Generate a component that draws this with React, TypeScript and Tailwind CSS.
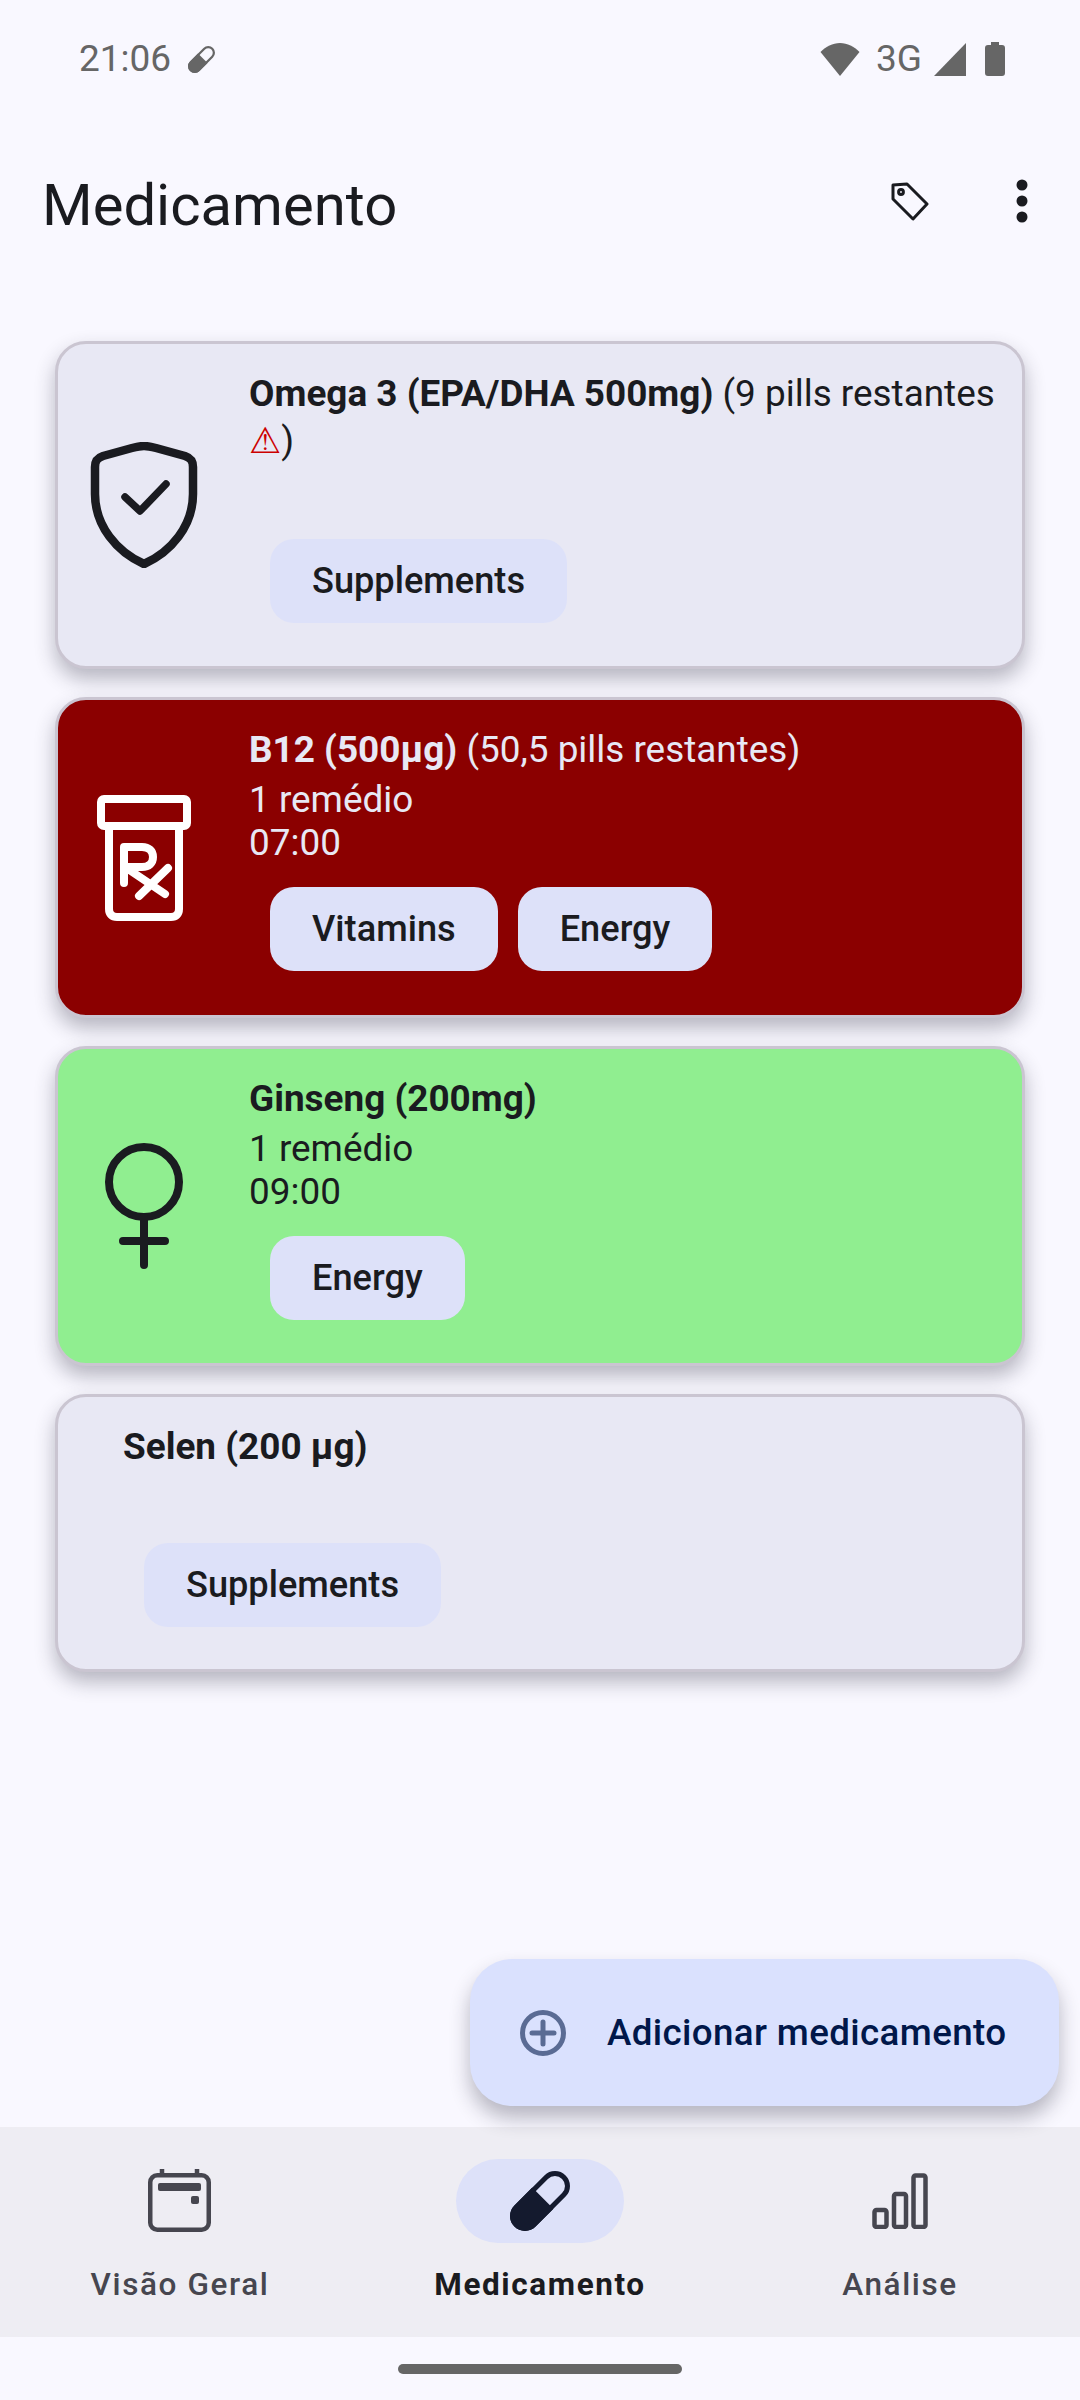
import React from "react";

type Med = {
  name: string;
  extra?: string;
  warn?: boolean;
  lines: string[];
  tags: string[];
  icon?: React.ReactNode;
  box: string;
  text: string;
  height: string;
};

const ShieldIcon = () => (
  <svg width="126" height="126" viewBox="0 0 126 126" fill="none" stroke="currentColor" strokeLinecap="round" strokeLinejoin="round">
    <path strokeWidth="8.5" d="M63 4c4 0 8 1 12 2l29 8c6 2 8 5 8 11v27c0 32-22 58-49 70-27-12-49-38-49-70V25c0-6 2-9 8-11l29-8c4-1 8-2 12-2z" />
    <path strokeWidth="7.5" d="M44 55l15 14 26-27" />
  </svg>
);

const RxIcon = () => (
  <svg width="126" height="126" viewBox="0 0 126 126" fill="none" stroke="#ffffff" strokeLinecap="round" strokeLinejoin="round" strokeWidth="8">
    <rect x="20" y="4" width="86" height="27" rx="3" />
    <path d="M28 31v83c0 5 3 8 8 8h54c5 0 8-3 8-8V31" />
    <path d="M43 88V52h18c7 0 11 4 11 10s-4 10-11 10H44l40 27M87 73L58 101" />
  </svg>
);

const FemaleIcon = () => (
  <svg width="126" height="126" viewBox="0 0 126 126" fill="none" stroke="currentColor" strokeLinecap="round" strokeWidth="8">
    <circle cx="63" cy="39" r="35" />
    <path d="M63 74v48M42 98h42" />
  </svg>
);

const PillIcon = ({ size, color }: { size: number; color: string }) => (
  <svg width={size} height={size} viewBox="0 0 60 60">
    <g transform="rotate(45 30 30)">
      <rect x="17.5" y="-3.7" width="25" height="67.4" rx="12.5" fill="none" stroke={color} strokeWidth="5" />
      <path d="M15 26h30v25.2a15 15 0 0 1-30 0z" fill={color} />
    </g>
  </svg>
);

const meds: Med[] = [
  {
    name: "Omega 3 (EPA/DHA 500mg)",
    extra: " (9 pills restantes ",
    warn: true,
    lines: [],
    tags: ["Supplements"],
    icon: <ShieldIcon />,
    box: "bg-[#e8e8f4] border-[#cac5d1]",
    text: "text-[#1a1b20]",
    height: "h-[328px]",
  },
  {
    name: "B12 (500µg)",
    extra: " (50,5 pills restantes)",
    lines: ["1 remédio", "07:00"],
    tags: ["Vitamins", "Energy"],
    icon: <RxIcon />,
    box: "bg-[#8b0000] border-[#cac5d1]",
    text: "text-[#e8e8f4]",
    height: "h-[321px]",
  },
  {
    name: "Ginseng (200mg)",
    lines: ["1 remédio", "09:00"],
    tags: ["Energy"],
    icon: <FemaleIcon />,
    box: "bg-[#90ee90] border-[#cac5d1]",
    text: "text-[#1a1b20]",
    height: "h-[320px]",
  },
  {
    name: "Selen (200 µg)",
    lines: [],
    tags: ["Supplements"],
    box: "bg-[#e8e8f4] border-[#cac5d1]",
    text: "text-[#1a1b20]",
    height: "h-[278px]",
  },
];

const MedCard = ({ med }: { med: Med }) => (
  <div className={`flex rounded-[31px] border-[3px] shadow-[0_10px_20px_rgba(40,40,60,0.32)] ${med.box} ${med.text} ${med.height}`}>
    {med.icon && (
      <div className="w-[191px] shrink-0 flex items-center justify-center pr-[20px] [&>svg]:shrink-0">
        {med.icon}
      </div>
    )}
    <div className={`flex-1 flex flex-col pt-[28px] ${med.icon ? "" : "pl-[65px]"}`}>
      <p className="text-[36.9px] leading-[43px] pr-[10px]">
        <span className="font-bold">{med.name}</span>
        {med.extra}
        {med.warn && (
          <>
            <span className="text-[#cc0000] font-['DejaVu_Sans'] text-[36px] leading-[51px]">⚠</span>)
          </>
        )}
      </p>
      {med.lines.length > 0 ? (
        <div className="mt-[7px] text-[36.9px] leading-[43px]">
          {med.lines.map((l) => (
            <p key={l}>{l}</p>
          ))}
        </div>
      ) : (
        <div className={med.warn ? "h-[50px]" : "h-[52px]"} />
      )}
      <div className="flex gap-[20px] pl-[21px] mt-[23px]">
        {med.tags.map((t) => (
          <span
            key={t}
            className="h-[84px] px-[42px] flex items-center rounded-[24px] bg-[#dde1f9] text-[#1a1b20] text-[36.2px] font-medium"
          >
            {t}
          </span>
        ))}
      </div>
    </div>
  </div>
);

const NavItem = ({ label, active, children }: { label: string; active?: boolean; children: React.ReactNode }) => (
  <div className="flex-1 flex flex-col items-center pt-[32px]">
    <div className={`w-[168px] h-[84px] rounded-full flex items-center justify-center ${active ? "bg-[#dde1f9]" : ""}`}>
      {children}
    </div>
    <span
      className={`mt-[22px] text-[31.5px] leading-[40px] tracking-[1.6px] ${
        active ? "font-bold text-[#1a1b20]" : "font-medium text-[#46464f]"
      }`}
    >
      {label}
    </span>
  </div>
);

export default function App() {
  return (
    <div className="relative w-[1080px] h-[2400px] overflow-hidden flex flex-col bg-[#f9f8ff] font-['Roboto',sans-serif]">
      {/* status bar */}
      <div className="h-[131px] shrink-0 flex items-start justify-between pl-[79px] pr-[75px] pt-[37px] text-[#666666]">
        <div className="flex items-center gap-[17px]">
          <span className="text-[37px] leading-[44px]">21:06</span>
          <PillIcon size={27} color="#666666" />
        </div>
        <div className="flex items-center h-[44px]">
          <svg width="40" height="33" viewBox="0 0 40 33" fill="currentColor">
            <path d="M20 33L0.5 9C6 3.5 12.5 0 20 0s14 3.5 19.5 9z" />
          </svg>
          <span className="ml-[16px] text-[37px] leading-[44px]">3G</span>
          <svg className="ml-[12px]" width="32" height="33" viewBox="0 0 32 33" fill="currentColor">
            <path d="M32 0v33H0z" />
          </svg>
          <svg className="ml-[19px]" width="20" height="34" viewBox="0 0 20 34" fill="currentColor">
            <path d="M6 0h8v3h3c2 0 3 1 3 3v25c0 2-1 3-3 3H3c-2 0-3-1-3-3V6c0-2 1-3 3-3h3z" />
          </svg>
        </div>
      </div>

      {/* top bar */}
      <div className="h-[147px] shrink-0 flex items-center justify-between pl-[42px] pr-[52px] text-[#1a1b20]">
        <h1 className="text-[58px] leading-[72px] font-normal">Medicamento</h1>
        <div className="flex items-center gap-[86px] -mt-[8px]">
          <svg width="40" height="40" viewBox="0 0 40 40" fill="none" stroke="currentColor" strokeWidth="3" strokeLinejoin="round">
            <path d="M3 4l14-1 20 20-14 15L3 18z" />
            <circle cx="11" cy="11" r="2.4" />
          </svg>
          <svg width="12" height="44" viewBox="0 0 12 44" fill="currentColor">
            <circle cx="6" cy="6" r="5.5" />
            <circle cx="6" cy="22" r="5.5" />
            <circle cx="6" cy="38" r="5.5" />
          </svg>
        </div>
      </div>

      {/* cards */}
      <div className="flex flex-col gap-[28px] mt-[63px] mx-[55px]">
        {meds.map((m) => (
          <MedCard key={m.name} med={m} />
        ))}
      </div>

      <div className="flex-1" />

      {/* bottom nav */}
      <div className="h-[210px] shrink-0 flex bg-[#eeedf3]">
        <NavItem label="Visão Geral">
          <svg width="64" height="66" viewBox="0 0 64 66" fill="none" stroke="#46464f" strokeWidth="4.5" strokeLinejoin="round">
            <rect x="2.25" y="7.25" width="58.5" height="54.5" rx="7" />
            <path d="M14 1v7M49 1v7" />
            <rect x="10" y="15" width="43" height="8" rx="2" fill="#46464f" stroke="none" />
            <rect x="43" y="28" width="8" height="8" rx="2" fill="#46464f" stroke="none" />
          </svg>
        </NavItem>
        <NavItem label="Medicamento" active>
          <PillIcon size={60} color="#141a2e" />
        </NavItem>
        <NavItem label="Análise">
          <svg width="56" height="56" viewBox="0 0 56 56" fill="none" stroke="#46464f" strokeWidth="4.5" strokeLinejoin="round">
            <rect x="2.5" y="37" width="12" height="17" rx="2" />
            <rect x="22" y="21" width="12" height="33" rx="2" />
            <rect x="41.5" y="2.5" width="12" height="51.5" rx="2" />
          </svg>
        </NavItem>
      </div>

      {/* gesture bar */}
      <div className="h-[63px] shrink-0 flex justify-center pt-[27px]">
        <div className="w-[284px] h-[10px] rounded-full bg-[#666666]" />
      </div>

      {/* fab */}
      <div className="absolute right-[21px] bottom-[294px] h-[147px] w-[589px] rounded-[42px] bg-[#dae1fe] flex items-center pl-[50px] shadow-[0_12px_20px_rgba(30,30,50,0.3)]">
        <svg width="46" height="46" viewBox="0 0 46 46" fill="none" stroke="#5a6b94" strokeWidth="5" strokeLinecap="round">
          <circle cx="23" cy="23" r="20.5" />
          <path d="M23 12v22M12 23h22" />
        </svg>
        <span className="ml-[41px] text-[36.75px] tracking-[0.36px] font-medium text-[#00174a]">Adicionar medicamento</span>
      </div>
    </div>
  );
}
